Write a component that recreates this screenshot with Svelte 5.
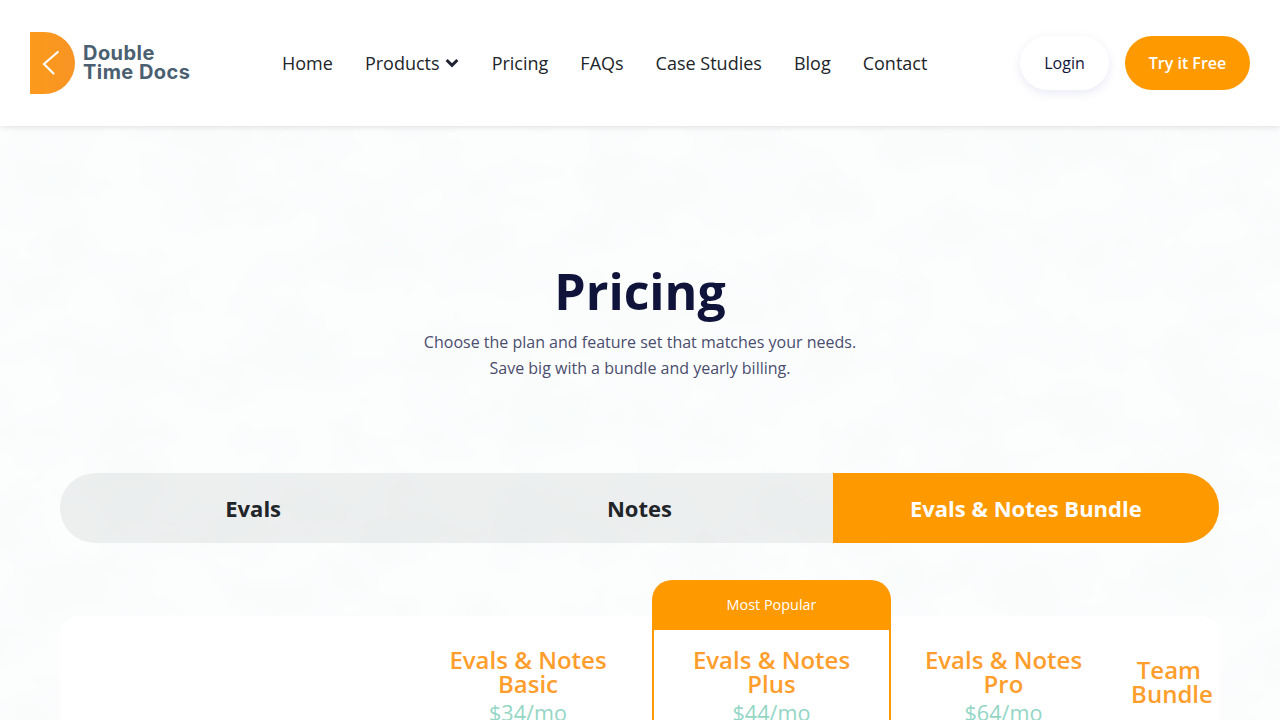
<script>
    const links = ['Home', 'Products', 'Pricing', 'FAQs', 'Case Studies', 'Blog', 'Contact'];
    const tabs = ['Evals', 'Notes', 'Evals & Notes Bundle'];
    let activeTab = 2;

    const plans = [
        { name: ['Evals & Notes', 'Basic'], price: '$34/mo' },
        { name: ['Evals & Notes', 'Plus'], price: '$44/mo', popular: true },
        { name: ['Evals & Notes', 'Pro'], price: '$64/mo' },
        { name: ['Team\u00a0', 'Bundle'], team: true }
    ];
</script>

<div class="page">
    <!-- faint mottled backdrop -->
    <svg class="texture" width="1280" height="720" aria-hidden="true">
        <filter id="mottle" x="0" y="0" width="100%" height="100%">
            <feTurbulence type="fractalNoise" baseFrequency="0.012 0.018" numOctaves="3" seed="7" />
            <feColorMatrix values="0 0 0 0 0.55  0 0 0 0 0.72  0 0 0 0 0.78  0 0 0 0.09 -0.03" />
        </filter>
        <rect width="1280" height="720" filter="url(#mottle)" />
    </svg>

    <header class="header">
        <a class="logo" href="#home">
            <svg width="45" height="62" viewBox="0 0 45 62">
                <defs>
                    <linearGradient id="logoFill" x1="0" y1="0" x2="1" y2="0">
                        <stop offset="0" stop-color="#fb9a1c" />
                        <stop offset="1" stop-color="#f89424" />
                    </linearGradient>
                </defs>
                <path d="M0 0H14A31 31 0 0 1 14 62H0Z" fill="url(#logoFill)" />
                <path d="M27.8 20L14 32L23.5 41.5" fill="none" stroke="#fff" stroke-width="2.2" stroke-linecap="round" stroke-linejoin="miter" />
            </svg>
            <span class="logo-text">Double<br />Time Docs</span>
        </a>

        <nav class="nav">
            {#each links as link}
                <a href="#{link}">
                    {link}
                    {#if link === 'Products'}
                        <svg class="caret" width="14" height="10" viewBox="0 0 14 10">
                            <path d="M1.6 2L7 7.4L12.4 2" fill="none" stroke="#1f2230" stroke-width="3" />
                        </svg>
                    {/if}
                </a>
            {/each}
        </nav>

        <div class="actions">
            <a class="btn login" href="#login">Login</a>
            <a class="btn try" href="#try">Try it Free</a>
        </div>
    </header>

    <main class="main">
        <section class="intro">
            <h1>Pricing</h1>
            <p>Choose the plan and feature set that matches your needs.<br />Save big with a bundle and yearly billing.</p>
        </section>

        <div class="tabs">
            {#each tabs as tab, i}
                <button class:active={i === activeTab} onclick={() => (activeTab = i)}>{tab}</button>
            {/each}
        </div>

        <section class="table">
            <div class="spacer"></div>
            {#each plans as plan}
                <div class="plan" class:popular={plan.popular} class:team={plan.team}>
                    {#if plan.popular}
                        <div class="ribbon">Most Popular</div>
                    {/if}
                    <h2>{plan.name[0]}<br />{plan.name[1]}</h2>
                    {#if plan.price}
                        <div class="price">{plan.price}</div>
                    {/if}
                </div>
            {/each}
        </section>
    </main>
</div>

<style>
    :global(body) {
        margin: 0;
        background: #fbfdfd;
    }
    .page {
        position: relative;
        height: 720px;
        overflow: hidden;
        font-family: "Open Sans", sans-serif;
        color: #212529;
        background: #fcfdfd;
    }
    .texture {
        position: absolute;
        left: 0;
        top: 0;
    }
    a {
        text-decoration: none;
        color: inherit;
    }
    .header {
        height: 126px;
        box-sizing: border-box;
        padding: 0 30px;
        display: flex;
        align-items: center;
        background: #fff;
        box-shadow: 0 1px 6px rgba(0, 0, 0, 0.12);
        position: relative;
    }
    .logo {
        display: flex;
        align-items: center;
        width: 252px;
    }
    .logo-text {
        margin-left: 8px;
        font-family: Inter, sans-serif;
        font-weight: 700;
        font-size: 20px;
        line-height: 19px;
        letter-spacing: 0.45px;
        color: #4a6070;
    }
    .nav {
        display: flex;
        gap: 32px;
        font-size: 18px;
        line-height: 26px;
    }
    .caret {
        margin-left: 0.4px;
        margin-right: 1px;
        position: relative;
        top: -2px;
    }
    .actions {
        margin-left: auto;
        display: flex;
        gap: 16px;
    }
    .btn {
        height: 54px;
        border-radius: 27px;
        display: flex;
        align-items: center;
        justify-content: center;
        font-size: 16px;
        font-weight: 600;
    }
    .login {
        width: 89px;
        font-weight: 500;
        color: #10143a;
        background: #fff;
        box-shadow: 0 3px 10px rgba(70, 80, 180, 0.12);
    }
    .try {
        width: 125px;
        color: #fff;
        background: #ff9900;
    }
    .main {
        position: relative;
        padding: 0 60px;
    }
    .intro {
        padding-top: 128px;
        text-align: center;
    }
    h1 {
        margin: 0;
        font-size: 50px;
        line-height: 75px;
        font-weight: 700;
        color: #10143a;
    }
    .intro p {
        margin: 0;
        font-size: 16px;
        line-height: 26px;
        color: #4a4d6e;
    }
    .tabs {
        margin-top: 92px;
        display: grid;
        grid-template-columns: repeat(3, 1fr);
        width: 1159px;
        height: 70px;
        border-radius: 35px;
        overflow: hidden;
        background: rgba(33, 45, 50, 0.065);
    }
    .tabs button {
        border: 0;
        padding: 0;
        background: none;
        font: 700 22px "Open Sans", sans-serif;
        color: #212529;
    }
    .tabs button.active {
        color: #fff;
        background: #ff9900;
    }
    .table {
        margin-top: 73px;
        display: grid;
        grid-template-columns: 344px 248px 239px 225px 104px;
        background: #fff;
        border-radius: 20px;
        height: 300px;
    }
    .plan {
        text-align: center;
        padding-top: 32px;
    }
    h2 {
        margin: 0;
        font-size: 24px;
        line-height: 24px;
        font-weight: 600;
        color: #ff9e2c;
    }
    .price {
        margin-top: 2px;
        font-size: 21.6px;
        line-height: 30px;
        color: #94d6c5;
    }
    .popular {
        position: relative;
        border: 2px solid #ff9900;
        border-top: 0;
        padding-top: 32px;
    }
    .ribbon {
        position: absolute;
        left: -2px;
        right: -2px;
        top: -36px;
        height: 50px;
        border-radius: 20px 20px 0 0;
        background: #ff9900;
        color: #fff;
        font-size: 14.4px;
        line-height: 50px;
    }
    .team {
        padding-top: 42px;
        padding-left: 8px;
    }
</style>
